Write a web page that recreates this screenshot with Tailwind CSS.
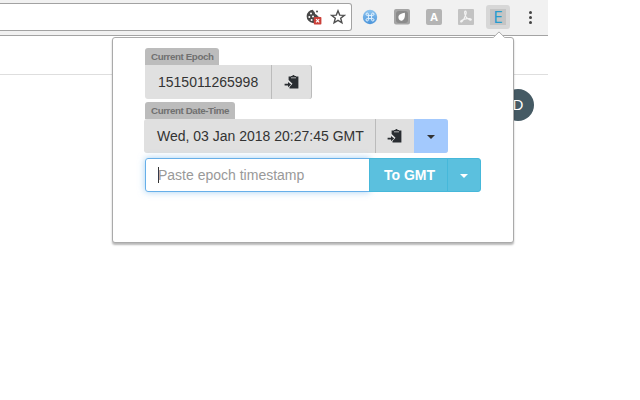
<!DOCTYPE html>
<html lang="en"><head><meta charset="utf-8"><title>Epoch converter</title>
<script src="https://cdn.jsdelivr.net/npm/@tailwindcss/browser@4"></script></head>
<body class="relative h-[400px] w-[640px] overflow-hidden bg-white font-['Liberation_Sans',Arial,sans-serif] text-[#333]">
<svg class="hidden"><symbol id="paste" viewBox="0 0 16 16"><path d="M4.600 2.500H7v1.800h5V2.500h2.400V14.500H5.500v-1.600l3-3.200L4.600 6z" fill="#292d31"/><path d="M6.900 3.600V1.900h1.300a1.300 1.300 0 0 1 2.500 0H12v1.700z" fill="#292d31"/><path d="M.6 9.800h3.400V7.900l3.200 2.700L4 13.300v-1.900H.6z" fill="#292d31"/></symbol></svg>
<header class="flex h-9 w-[548px] items-start border-b border-[#a3a3a3] bg-[#f1f1f1] pt-[3px]">
  <div class="flex h-7 w-[352px] shrink-0 items-center justify-end gap-[8px] rounded-r-[3px] border border-l-0 border-[#a2a2a2] bg-white pr-[5px]">
    <svg class="size-4" viewBox="0 0 16 16"><path d="M7 .7a6.6 6.6 0 1 0 6.8 7.2A3 3 0 0 1 11 6a3 3 0 0 1-2.400-3A3 3 0 0 1 7 .7z" fill="#484848"/><g fill="#fff"><circle cx="5" cy="4.5" r="1"/><circle cx="3.3" cy="8" r="1"/><circle cx="7" cy="7.4" r="1"/><circle cx="5.6" cy="11" r="1"/></g><circle cx="11" cy="2.6" r="1" fill="#484848"/><rect x="7.8" y="8" width="7.6" height="7.6" rx=".8" fill="#cb4039"/><path d="m10 10.2 3.2 3.2m0-3.2L10 13.4" stroke="#fff" stroke-width="1.2"/></svg>
    <svg class="size-4" viewBox="0 0 16 16"><path d="m8 1.8 1.7 4.3 4.6.3-3.6 2.9 1.2 4.5L8 11.3l-3.9 2.5 1.2-4.5-3.6-2.9 4.6-.3z" fill="none" stroke="#505050" stroke-width="1.4"/></svg>
  </div>
  <div class="flex h-7 items-center pl-[10px]">
    <svg class="size-4" viewBox="0 0 16 16"><defs><linearGradient id="b" x2="0" y2="1"><stop stop-color="#8dc4ef"/><stop offset="1" stop-color="#4a94da"/></linearGradient></defs><circle cx="8" cy="8" r="7.2" fill="url(#b)"/><path d="M6.4 6.4h3.2v3.2H6.4zm0 0H5.2a1.2 1.2 0 1 1 1.2-1.2zm3.2 0V5.2a1.2 1.2 0 1 1 1.2 1.2zm0 3.2h1.2a1.2 1.2 0 1 1-1.2 1.2zm-3.2 0v1.2a1.2 1.2 0 1 1-1.2-1.2z" fill="none" stroke="#e9f5ff"/></svg>
    <svg class="ml-4 size-4" viewBox="0 0 16 16"><rect width="16" height="15.6" rx="2" fill="#a5a5a5"/><rect x="2" y="2" width="12" height="12" rx="3" fill="#8b8b8b"/><path d="M4.600 7c.8-1.700 2.800-2.600 6.200-3.200.5 3.200-.2 7.200-3 7.900C5.200 12 4 9.400 4.600 7z" fill="#fff"/></svg>
    <div class="ml-4 flex size-4 items-center justify-center rounded-[2px] bg-[#b4b4b4] font-['Open_Sans',sans-serif] text-[11px] font-bold leading-none text-white"><span class="-mt-px">A</span></div>
    <svg class="ml-4 size-4" viewBox="0 0 16 16"><rect width="16" height="16" rx="1" fill="#c3c3c3"/><path d="M7.3 2.2c1.8 0 .7 3.8-.9 6.7-1.2 2.4-2.9 4.6-3.6 4-.9-1 2.2-2.6 5-3.1 2.7-.6 5.5-.3 5.5.8 0 1.2-2.8.1-4.6-1.9C6.700 6.800 6 2.200 7.300 2.200z" fill="none" stroke="#f3f3f3" stroke-width="1.2"/></svg>
    <div class="ml-3 flex h-6 w-6 items-center justify-center rounded-[3px] bg-[#d7d7d7]"><div class="flex size-4 items-center justify-center bg-[#c4c4c4] font-['Open_Sans',sans-serif] text-[17px] leading-none text-[#249bcf]"><span class="-mt-[2px]">E</span></div></div>
    <div class="ml-[19px] flex flex-col gap-[2px]"><i class="size-[3px] rounded-full bg-[#444]"></i><i class="size-[3px] rounded-full bg-[#444]"></i><i class="size-[3px] rounded-full bg-[#444]"></i></div>
  </div>
</header>
<hr class="mt-[38px] w-[548px] border-[#dedede]">
<div class="absolute left-[502px] top-[89px] flex size-8 items-center justify-center rounded-full bg-[#455a64] text-[15px] text-white">D</div>
<main class="absolute left-[112px] top-[37px] flex h-[206px] w-[402px] flex-col items-start rounded-[3px] border border-[#aaa] bg-white pl-8 pt-[10px] shadow-[0_2px_2px_rgba(0,0,0,.28)]">
  <svg class="absolute left-[379px] top-[-7px] h-[8px] w-[14px]" viewBox="0 0 14 8"><path d="M0 8 1 6.500 7 .7l6 5.800 1 1.500z" fill="#fff"/><path d="M.5 6.500h.8L7 .9l5.700 5.600h.8" fill="none" stroke="#aaa"/></svg>
  <div class="flex h-[17px] w-[74px] items-center rounded-t-[3px] bg-[#bcbcbc] pl-[6px] pt-[2px] text-[9.750px] font-bold tracking-[-0.4px] text-[#707070]"><span class="whitespace-nowrap">Current Epoch</span></div>
  <div class="flex h-[34px] w-[167px] rounded-r-[3px] rounded-bl-[3px] bg-[#e0e0e0]">
    <div class="flex w-[127px] items-center border-r border-[#bbb] pl-[13px] pt-px text-[14px]"><span>1515011265998</span></div>
    <div class="flex w-10 items-center justify-center rounded-r-[3px] border-r border-[#bbb]"><svg class="size-4"><use href="#paste"/></svg></div>
  </div>
  <div class="mt-[3px] flex h-[17px] w-[90px] items-center rounded-t-[3px] bg-[#bcbcbc] pl-[6px] pt-[2px] text-[9.750px] font-bold tracking-[-0.4px] text-[#707070]"><span class="whitespace-nowrap">Current Date-Time</span></div>
  <div class="-ml-px flex h-[34px] w-[304px] overflow-hidden rounded-[3px] bg-[#e0e0e0]">
    <div class="flex w-[232px] items-center border-r border-[#bbb] pl-[13px] pt-px text-[14px]"><span class="whitespace-nowrap">Wed, 03 Jan 2018 20:27:45 GMT</span></div>
    <div class="flex w-[38px] items-center justify-center"><svg class="size-4"><use href="#paste"/></svg></div>
    <div class="flex w-[34px] items-center justify-center bg-[#a3c9fd]"><svg class="mt-[2px] h-1 w-2" viewBox="0 0 8 4"><path d="M0 0h8L4 4z" fill="#333"/></svg></div>
  </div>
  <div class="mt-[5px] flex h-[34px] w-[336px]">
    <div class="flex w-[225px] items-center rounded-l-[3px] border border-[#66afe9] pl-3 text-[14px] text-[#999] shadow-[0_0_7px_rgba(102,175,233,.6)]"><i class="h-4 w-px bg-[#333]"></i><span class="-ml-px pt-px">Paste epoch timestamp</span></div>
    <div class="relative -ml-px flex w-[79px] items-center justify-center border border-[#46b8da] bg-[#5bc0de] pl-[2px] pt-px text-[14px] font-bold text-white"><span>To GMT</span></div>
    <div class="relative -ml-px flex w-[34px] items-center justify-center rounded-r-[3px] border border-[#46b8da] bg-[#5bc0de]"><svg class="mt-[2px] h-1 w-2" viewBox="0 0 8 4"><path d="M0 0h8L4 4z" fill="#fff"/></svg></div>
  </div>
</main>
</body></html>
